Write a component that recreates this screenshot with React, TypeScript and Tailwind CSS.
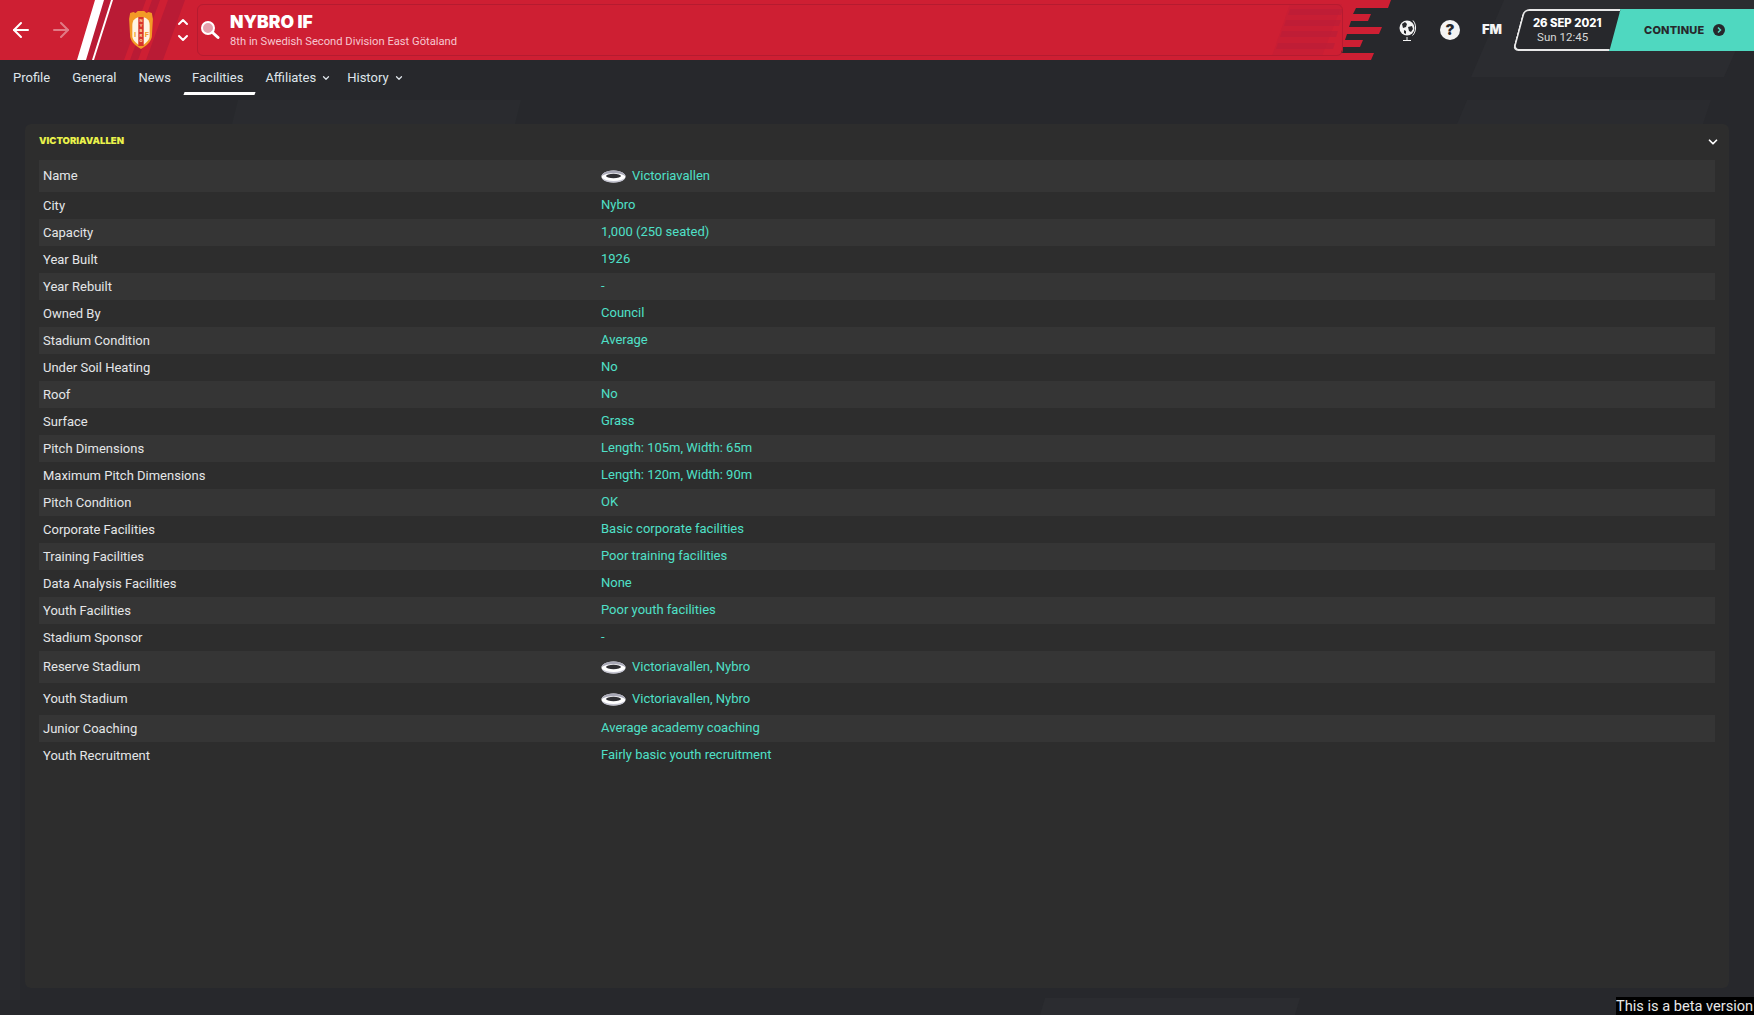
import { ArrowLeft, ArrowRight, ChevronDown, ChevronUp } from 'lucide-react'

interface IRow {
    label: string
    value: string
    stadium?: boolean
}

const rows: IRow[] = [
    { label: 'Name', value: 'Victoriavallen', stadium: true },
    { label: 'City', value: 'Nybro' },
    { label: 'Capacity', value: '1,000 (250 seated)' },
    { label: 'Year Built', value: '1926' },
    { label: 'Year Rebuilt', value: '-' },
    { label: 'Owned By', value: 'Council' },
    { label: 'Stadium Condition', value: 'Average' },
    { label: 'Under Soil Heating', value: 'No' },
    { label: 'Roof', value: 'No' },
    { label: 'Surface', value: 'Grass' },
    { label: 'Pitch Dimensions', value: 'Length: 105m, Width: 65m' },
    { label: 'Maximum Pitch Dimensions', value: 'Length: 120m, Width: 90m' },
    { label: 'Pitch Condition', value: 'OK' },
    { label: 'Corporate Facilities', value: 'Basic corporate facilities' },
    { label: 'Training Facilities', value: 'Poor training facilities' },
    { label: 'Data Analysis Facilities', value: 'None' },
    { label: 'Youth Facilities', value: 'Poor youth facilities' },
    { label: 'Stadium Sponsor', value: '-' },
    { label: 'Reserve Stadium', value: 'Victoriavallen, Nybro', stadium: true },
    { label: 'Youth Stadium', value: 'Victoriavallen, Nybro', stadium: true },
    { label: 'Junior Coaching', value: 'Average academy coaching' },
    { label: 'Youth Recruitment', value: 'Fairly basic youth recruitment' }
]

const StadiumIcon = () => (
    <svg width="25" height="13" viewBox="0 0 25 13" className="mr-[6px] shrink-0">
        <ellipse cx="12.500" cy="6.500" rx="12" ry="6" fill="#ffffff" />
        <path d="M.5 6.500C.5 3.200 5.900.5 12.500.5s12 2.700 12 6c-1.500-1.800-6-3.200-12-3.200S2 4.700.5 6.500z" fill="#a8a8b6" />
        <ellipse cx="12.500" cy="6" rx="7.500" ry="2.200" fill="#2f2f33" />
        <path d="M.5 7.500c1 3 5.500 5 12 5s11-2 12-5c-2 2-6 3.400-12 3.400S2.500 9.500.5 7.500z" fill="#c4c4d0" />
    </svg>
)

const Crest = () => (
    <svg width="26" height="40" viewBox="0 0 24 40" preserveAspectRatio="none">
        <path d="M2 3l3-1 2 1 2-2h6l2 2 2-1 3 1 1 6-1 18c-1 5-5 9-10 12C7 36 3 32 2 27L1 9z" fill="#f39a26" />
        <path d="M12 7c5 0 8 3 8 8v11c0 4-4 8-8 10-4-2-8-6-8-10V15c0-5 3-8 8-8z" fill="#fff4e3" />
        <rect x="9.500" y="7" width="5" height="29" fill="#d8352a" />
        <text x="12" y="12" fontSize="4" fontWeight="700" textAnchor="middle" fill="#ffd9a8">N</text>
        <text x="12" y="17" fontSize="4" fontWeight="700" textAnchor="middle" fill="#ffd9a8">Y</text>
        <text x="12" y="22" fontSize="4" fontWeight="700" textAnchor="middle" fill="#ffd9a8">B</text>
        <text x="12" y="27" fontSize="4" fontWeight="700" textAnchor="middle" fill="#ffd9a8">R</text>
        <text x="12" y="32" fontSize="4" fontWeight="700" textAnchor="middle" fill="#ffd9a8">O</text>
        <text x="6.500" y="27" fontSize="7" fontWeight="700" textAnchor="middle" fill="#f39a26">I</text>
        <text x="17.500" y="27" fontSize="7" fontWeight="700" textAnchor="middle" fill="#f39a26">F</text>
    </svg>
)

const RedShape = () => (
    <svg width="1391" height="60" viewBox="0 0 1391 60" className="absolute left-0 top-0">
        <path d="M0 0H1391L1388 8H1356L1353 14H1371L1368 21H1351L1349 27H1382L1379 34H1347L1345 40H1363L1360 47H1343L1341 53H1374L1371 60H0z" fill="#ce1f33" />
        <path d="M100 0H185L163 60H78z" fill="#b91b35" />
        <path d="M146 0H152L130 60H124zM160 0H168L146 60H138z" fill="#ce1f33" />
        <path d="M95 0H104L86 60H77zM111 0H113L94 60H92z" fill="#ffffff" />
        <path d="M1290 9H1343L1341 15H1288zM1286 20H1341L1339 26H1284zM1282 31H1338L1336 37H1280zM1278 43H1335L1333 49H1276z" fill="#bd1e37" opacity="0.8" />
        <path d="M1290 4H1342L1322 56H1272z" fill="#bd1e37" opacity="0.35" />
    </svg>
)

const Background = () => (
    <svg width="1754" height="1015" viewBox="0 0 1754 1015" className="absolute left-0 top-0">
        <path d="M1504 0H1754V50H1736L1724 77H1471z" fill="#2b2c30" />
        <path d="M1467 100H1711L1703 124H1457zM238 100H521L515 124H232z" fill="#2a2b2f" />
        <path d="M0 200H20V1000H0z" fill="#292a2e" />
        <path d="M1045 998H1300L1295 1015H1040z" fill="#2b2c30" />
    </svg>
)

export default function App() {
    return (
        <div
            className="relative flex h-screen w-full flex-col overflow-hidden bg-[#27282c] text-[13px] text-[#e4e6e8]"
            style={{ fontFamily: 'Roboto, sans-serif' }}
        >
            <Background />

            <header className="relative flex h-[60px] shrink-0">
                <div className="relative flex w-[1391px] items-center">
                    <RedShape />
                    <div className="relative flex h-full items-center">
                        <ArrowLeft size={24} strokeWidth={2} className="ml-[9px] text-white" />
                        <ArrowRight size={24} strokeWidth={2} className="ml-4 text-white opacity-40" />
                        <div className="ml-[55px] h-10 w-[26px]">
                            <Crest />
                        </div>
                        <div className="ml-[21px] flex w-4 flex-col items-center text-white">
                            <ChevronUp size={16} strokeWidth={3} />
                            <ChevronDown size={16} strokeWidth={3} />
                        </div>
                        <div className="ml-[6px] flex h-[52px] w-[1146px] items-center rounded-md border border-[#b51b30]">
                            <svg width="20" height="20" viewBox="0 0 20 20" className="ml-[2px]">
                                <circle cx="8" cy="8" r="6" fill="#e6a0ad" stroke="#ffffff" strokeWidth="2" />
                                <path d="M12.500 12.500L18 17.500" stroke="#ffffff" strokeWidth="3" strokeLinecap="round" />
                            </svg>
                            <div className="ml-[10px] flex flex-col pt-[1px]">
                                <span className="text-[17.500px] font-black leading-[20px] text-white" style={{ fontFamily: 'Inter, sans-serif' }}>
                                    NYBRO IF
                                </span>
                                <span className="mt-[2px] text-[11.200px] leading-[16px] text-[#f6c6cf]">
                                    8th in Swedish Second Division East Götaland
                                </span>
                            </div>
                        </div>
                    </div>
                </div>

                <div className="ml-[6px] flex items-center">
                    <svg width="20" height="24" viewBox="0 0 20 24" className="mt-[-1px]">
                        <circle cx="10" cy="10" r="7.500" fill="#f4f4f4" />
                        <path d="M5 6l3-2 2 2-1 3-3 1zM11 9l4-1 1 3-2 3-2-1zM7 12l2 1v3l-2-1z" fill="#27282c" />
                        <path d="M16 2.500c3.500 4 3.500 11-.5 15" fill="none" stroke="#f4f4f4" strokeWidth="1" />
                        <path d="M10 19v3M6 22.500h8" stroke="#f4f4f4" strokeWidth="1" />
                    </svg>
                    <div className="ml-[23px] flex h-5 w-5 items-center justify-center rounded-full bg-[#f4f4f4] text-[15px] font-black text-[#27282c]" style={{ fontFamily: 'Inter, sans-serif' }}>
                        ?
                    </div>
                    <span className="ml-[22px] text-[13px] font-black text-[#f4f4f4]" style={{ fontFamily: 'Inter, sans-serif' }}>
                        FM
                    </span>
                </div>

                <div className="absolute right-0 top-[9px] flex h-[42px] w-[240px]">
                    <div className="relative z-10 ml-[4px] flex w-[97px] -skew-x-[15deg] flex-col items-center justify-center rounded-l-md border-y-2 border-l-2 border-[#e8e8e8] bg-[#27282c] pr-[5px]">
                        <span className="skew-x-[15deg] text-[11.300px] font-extrabold leading-[14px] text-white" style={{ fontFamily: 'Inter, sans-serif' }}>
                            26 SEP 2021
                        </span>
                        <span className="skew-x-[15deg] text-[11.500px] leading-[14px] text-[#d8d8d8]">Sun 12:45</span>
                    </div>
                    <div className="ml-[-12px] flex flex-1 items-center bg-[#4fd8c0] pl-[41px]">
                        <span className="text-[11px] font-extrabold tracking-[0.2px] text-[#27282c]" style={{ fontFamily: 'Inter, sans-serif' }}>
                            CONTINUE
                        </span>
                        <span className="ml-[9px] flex h-3 w-3 items-center justify-center rounded-full bg-[#27282c]">
                            <svg width="8" height="8" viewBox="0 0 8 8">
                                <path d="M3 1.500L5.500 4 3 6.500" fill="none" stroke="#4fd8c0" strokeWidth="1.500" />
                            </svg>
                        </span>
                    </div>
                </div>
            </header>

            <nav className="relative flex h-10 shrink-0 items-start pl-[13px] pt-[9px] text-[#dfe5ea]">
                <a className="mr-[22px] leading-[18px]">Profile</a>
                <a className="mr-[22px] leading-[18px]">General</a>
                <a className="mr-[21px] leading-[18px]">News</a>
                <a className='relative mr-[22px] leading-[18px] after:absolute after:left-[-8px] after:right-[-12px] after:top-[23px] after:h-[3px] after:-skew-x-[20deg] after:bg-white after:content-[""]'>
                    Facilities
                </a>
                <a className="flex items-center leading-[18px]">
                    Affiliates
                    <ChevronDown size={10} strokeWidth={3} className="ml-[5px]" />
                </a>
                <a className="ml-[16px] flex items-center leading-[18px]">
                    History
                    <ChevronDown size={10} strokeWidth={3} className="ml-[5px]" />
                </a>
            </nav>

            <main className="relative flex min-h-0 flex-1 px-[25px] pb-[27px] pt-[24px]">
                <section className="flex w-full flex-col rounded-md bg-[#2d2d2d] px-[14px]">
                    <div className="flex h-9 shrink-0 items-center justify-between pb-[1px]">
                        <h2 className="text-[9.500px] font-black text-[#e9f24b]" style={{ fontFamily: 'Inter, sans-serif' }}>
                            VICTORIAVALLEN
                        </h2>
                        <ChevronDown size={14} strokeWidth={3} className="mr-[-5px] text-white" />
                    </div>
                    <div className="flex flex-col">
                        {rows.map((row, i) => (
                            <div
                                key={row.label}
                                className={`grid grid-cols-[562px_1fr] items-center ${row.stadium ? 'h-8' : 'h-[27px]'} ${i % 2 === 0 ? 'bg-[#353535]' : ''}`}
                            >
                                <span className="pl-1">{row.label}</span>
                                <span className={`flex items-center text-[#4fe0c8] ${row.stadium ? '' : 'pb-[2px]'}`}>
                                    {row.stadium && <StadiumIcon />}
                                    {row.value}
                                </span>
                            </div>
                        ))}
                    </div>
                </section>
            </main>

            <div className="absolute bottom-0 right-0 h-[18px] w-[138px] overflow-hidden whitespace-nowrap bg-black text-[14.600px] leading-[18px] text-[#e8e8e8]">
                This is a beta version
            </div>
        </div>
    )
}
